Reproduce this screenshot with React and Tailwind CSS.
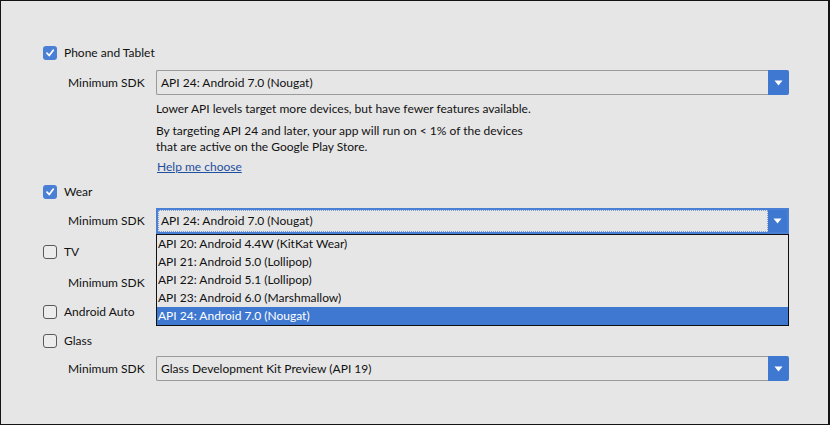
import React from "react";

const font = { fontFamily: 'Lato, "Noto Sans", sans-serif' };

function Check({ checked }) {
  if (checked) {
    return (
      <div className="w-[14px] h-[14px] rounded-[3px] bg-[#4a7fd6] flex items-center justify-center shrink-0">
        <svg width="10" height="10" viewBox="0 0 10 10">
          <path d="M2 5.2 L4.2 7.5 L8.2 2.2" stroke="white" strokeWidth="1.8" fill="none" strokeLinecap="round" strokeLinejoin="round" />
        </svg>
      </div>
    );
  }
  return <div className="w-[14px] h-[14px] rounded-[3px] border border-[#5a5a5a] bg-[#ececec] shrink-0" />;
}

function Arrow() {
  return (
    <div className="w-[21px] self-stretch bg-[#3f78d1] flex items-center justify-center rounded-r-[2px]">
      <svg width="9" height="6" viewBox="0 0 9 6">
        <path d="M0.5 0.5 H8.5 L4.5 5.5 Z" fill="white" />
      </svg>
    </div>
  );
}

function Dropdown({ value, focused }) {
  if (focused) {
    return (
      <div className="w-[633px] h-[26px] border-2 border-[#4a7fd6] flex bg-[#e6e6e6]">
        <div className="flex-1 border border-dotted border-[#7a9fd8] flex items-center pl-[2px] text-[#111]">{value}</div>
        <div className="w-[19px] bg-[#3f78d1] flex items-center justify-center">
          <svg width="9" height="6" viewBox="0 0 9 6">
            <path d="M0.5 0.5 H8.5 L4.5 5.5 Z" fill="white" />
          </svg>
        </div>
      </div>
    );
  }
  return (
    <div className="w-[633px] h-[25px] flex">
      <div className="flex-1 border border-r-0 border-[#9a9a9a] rounded-l-[2px] flex items-center pl-[4px] text-[#111]">{value}</div>
      <Arrow />
    </div>
  );
}

function CheckRow({ checked, label, className }) {
  return (
    <div className={"flex items-center h-[14px] gap-[7px] " + className}>
      <Check checked={checked} />
      <span className="text-[#111] leading-[14px]">{label}</span>
    </div>
  );
}

function SdkRow({ value, focused, className, hidden }) {
  return (
    <div className={"flex items-center ml-[25px] " + className}>
      <span className="w-[88px] text-[#111]">Minimum SDK</span>
      {hidden ? <div className="w-[633px] h-[25px]" /> : <Dropdown value={value} focused={focused} />}
    </div>
  );
}

const items = [
  "API 20: Android 4.4W (KitKat Wear)",
  "API 21: Android 5.0 (Lollipop)",
  "API 22: Android 5.1 (Lollipop)",
  "API 23: Android 6.0 (Marshmallow)",
  "API 24: Android 7.0 (Nougat)",
];

export default function App() {
  return (
    <div
      style={font}
      className="relative w-[830px] h-[425px] border border-r-2 border-[#141414] bg-[#e6e6e6] text-[12px] pl-[42px] flex flex-col"
    >
      <CheckRow checked label="Phone and Tablet" className="mt-[45px]" />
      <SdkRow value="API 24: Android 7.0 (Nougat)" className="mt-[10px]" />
      <div className="ml-[113px] mt-[6px] leading-[16px] text-[#111]">
        <div>Lower API levels target more devices, but have fewer features available.</div>
        <div className="mt-[6px]">By targeting API 24 and later, your app will run on &lt; 1% of the devices</div>
        <div>that are active on the Google Play Store.</div>
        <div className="mt-[4px] ml-[1px] text-[#1f4f9f] underline">Help me choose</div>
      </div>
      <CheckRow checked label="Wear" className="mt-[10px]" />
      <SdkRow value="API 24: Android 7.0 (Nougat)" focused className="mt-[9px]" />
      <CheckRow label="TV" className="mt-[11px]" />
      <SdkRow hidden className="mt-[11px]" />
      <CheckRow label="Android Auto" className="mt-[10px]" />
      <CheckRow label="Glass" className="mt-[15px]" />
      <SdkRow value="Glass Development Kit Preview (API 19)" className="mt-[8px]" />

      <div className="absolute left-[155px] top-[233px] w-[633px] border border-[#111] bg-[#e6e6e6] text-[#111]">
        {items.map((t, i) => (
          <div
            key={t}
            className={
              "h-[18px] leading-[18px] pl-[1px] " +
              (i === 4 ? "bg-[#3f78d1] text-white" : "")
            }
          >
            {t}
          </div>
        ))}
      </div>
    </div>
  );
}
